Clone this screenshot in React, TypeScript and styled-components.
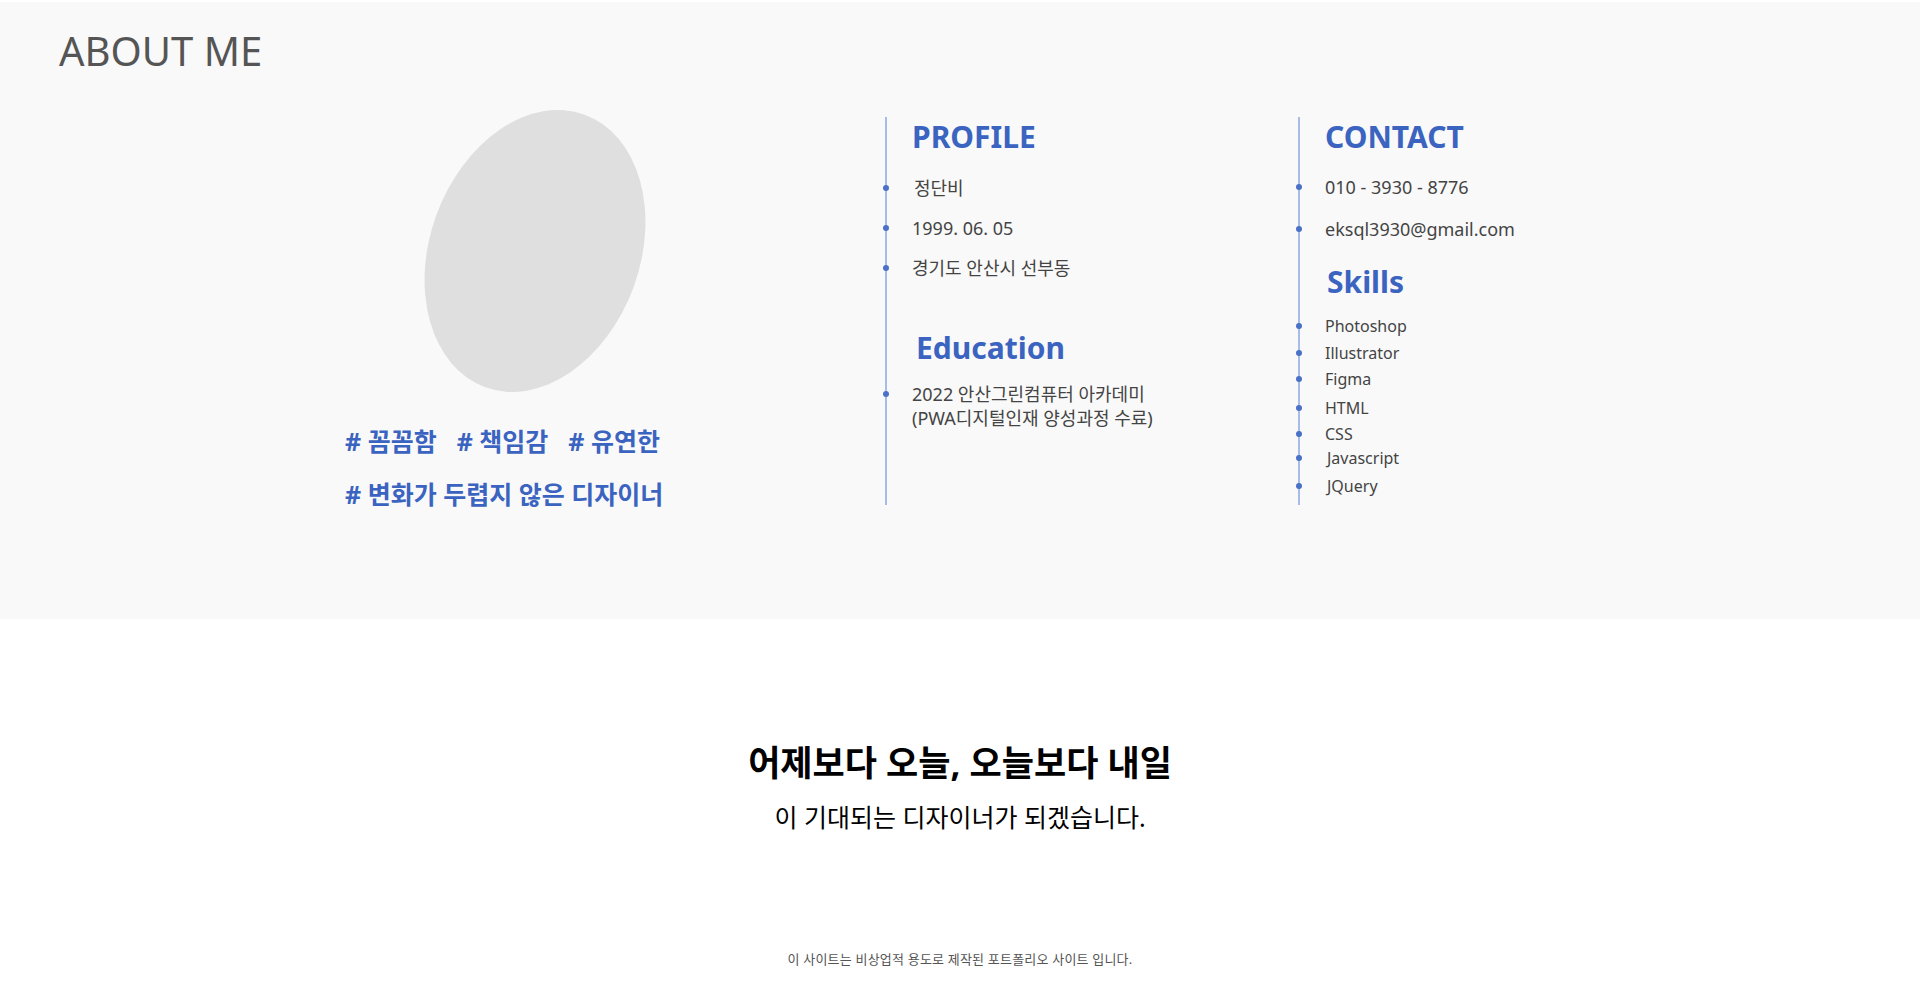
import React from "react";
import styled, { createGlobalStyle } from "styled-components";

const BLUE = "#3b64c1";

const GlobalStyle = createGlobalStyle`
  * { box-sizing: border-box; }
  html, body { margin: 0; padding: 0; background: #ffffff; }
  body {
    font-family: "Noto Sans", "Noto Sans CJK KR", sans-serif;
    color: #444444;
  }
  h1, h2, h3, p, ul, li { margin: 0; padding: 0; }
  ul { list-style: none; }
`;

const Page = styled.div`
  display: flex;
  flex-direction: column;
  min-height: 988px;
`;

const About = styled.section`
  margin-top: 2px;
  height: 617px;
  background: #f9f9f9;
  padding: 22px 0 0 59px;
`;

const SectionTitle = styled.h2`
  font-size: 40px;
  font-weight: 400;
  line-height: 54px;
  color: #555555;
`;

const AboutRow = styled.div`
  display: flex;
  margin-top: 39px;
  padding-left: 286px;
  height: 388px;
`;

const PhotoColumn = styled.div`
  width: 380px;
  margin-right: 160px;
  display: flex;
  flex-direction: column;
`;

const Photo = styled.div`
  flex: 0 0 auto;
  width: 210px;
  height: 290px;
  margin: -11px auto 0;
  border-radius: 50%;
  background: #dfdfdf;
  transform: rotate(20deg);
`;

const Tags = styled.div`
  flex: 0 0 auto;
  margin-top: 29px;
  display: flex;
  flex-direction: column;
  gap: 21px;
`;

const TagLine = styled.p`
  display: flex;
  gap: 20px;
  font-size: 25px;
  font-weight: 700;
  line-height: 32px;
  color: ${BLUE};
  white-space: nowrap;
`;

const InfoColumn = styled.div`
  width: 413px;
  border-left: 2px solid #a7bce6;
  padding-left: 25px;
  display: flex;
  flex-direction: column;
`;

const ColumnTitle = styled.h3<{ $indent?: number; $mt?: number }>`
  font-size: 30px;
  font-weight: 700;
  line-height: 40px;
  color: ${BLUE};
  margin-left: ${(p) => p.$indent ?? 0}px;
  margin-top: ${(p) => p.$mt ?? 0}px;
`;

const ItemList = styled.ul<{ $gap: number; $mt: number }>`
  display: flex;
  flex-direction: column;
  gap: ${(p) => p.$gap}px;
  margin-top: ${(p) => p.$mt}px;
`;

const Item = styled.li<{ $size: number; $lh: number; $indent?: number; $mt?: number }>`
  position: relative;
  font-size: ${(p) => p.$size}px;
  line-height: ${(p) => p.$lh}px;
  color: #444444;
  padding-left: ${(p) => p.$indent ?? 0}px;
  margin-top: ${(p) => p.$mt ?? 0}px;

  &::before {
    content: "";
    position: absolute;
    left: -29px;
    top: ${(p) => p.$lh / 2 - 3}px;
    width: 6px;
    height: 6px;
    border-radius: 50%;
    background: #4a71c7;
  }
`;

const Motto = styled.section`
  display: flex;
  flex-direction: column;
  align-items: center;
  padding-top: 120px;
`;

const MottoTitle = styled.h2`
  font-size: 35px;
  font-weight: 700;
  line-height: 48px;
  color: #000000;
`;

const MottoText = styled.p`
  margin-top: 13px;
  font-size: 25px;
  font-weight: 400;
  line-height: 34px;
  color: #000000;
`;

const Footer = styled.footer`
  margin-top: 116px;
  text-align: center;
  font-size: 13px;
  letter-spacing: 0.2px;
  line-height: 18px;
  color: #555555;
`;

const skills: { name: string; offset: number }[] = [
  { name: "Photoshop", offset: 0 },
  { name: "Illustrator", offset: 5 },
  { name: "Figma", offset: 4 },
  { name: "HTML", offset: 6.5 },
  { name: "CSS", offset: 4 },
  { name: "Javascript", offset: 2.5 },
  { name: "JQuery", offset: 5.5 },
];

export default function App() {
  return (
    <>
      <GlobalStyle />
      <Page>
        <About>
          <SectionTitle>ABOUT ME</SectionTitle>
          <AboutRow>
            <PhotoColumn>
              <Photo />
              <Tags>
                <TagLine>
                  <span># 꼼꼼함</span>
                  <span># 책임감</span>
                  <span># 유연한</span>
                </TagLine>
                <TagLine>
                  <span># 변화가 두렵지 않은 디자이너</span>
                </TagLine>
              </Tags>
            </PhotoColumn>

            <InfoColumn>
              <ColumnTitle>PROFILE</ColumnTitle>
              <ItemList $gap={16} $mt={19}>
                <Item $size={18} $lh={24} $indent={2}>정단비</Item>
                <Item $size={18} $lh={24}>1999. 06. 05</Item>
                <Item $size={18} $lh={24}>경기도 안산시 선부동</Item>
              </ItemList>
              <ColumnTitle $indent={4} $mt={48}>Education</ColumnTitle>
              <ItemList $gap={0} $mt={14}>
                <Item $size={18} $lh={24}>
                  2022 안산그린컴퓨터 아카데미
                  <br />
                  (PWA디지털인재 양성과정 수료)
                </Item>
              </ItemList>
            </InfoColumn>

            <InfoColumn>
              <ColumnTitle>CONTACT</ColumnTitle>
              <ItemList $gap={18} $mt={18}>
                <Item $size={18} $lh={24}>010 - 3930 - 8776</Item>
                <Item $size={18} $lh={24}>eksql3930@gmail.com</Item>
              </ItemList>
              <ColumnTitle $indent={2} $mt={21}>Skills</ColumnTitle>
              <ItemList $gap={0} $mt={13}>
                {skills.map((s) => (
                  <Item
                    key={s.name}
                    $size={16}
                    $lh={22}
                    $mt={s.offset}
                    $indent={s.name.startsWith("J") ? 2 : 0}
                  >
                    {s.name}
                  </Item>
                ))}
              </ItemList>
            </InfoColumn>
          </AboutRow>
        </About>

        <Motto>
          <MottoTitle>어제보다 오늘, 오늘보다 내일</MottoTitle>
          <MottoText>이 기대되는 디자이너가 되겠습니다.</MottoText>
        </Motto>

        <Footer>이 사이트는 비상업적 용도로 제작된 포트폴리오 사이트 입니다.</Footer>
      </Page>
    </>
  );
}
